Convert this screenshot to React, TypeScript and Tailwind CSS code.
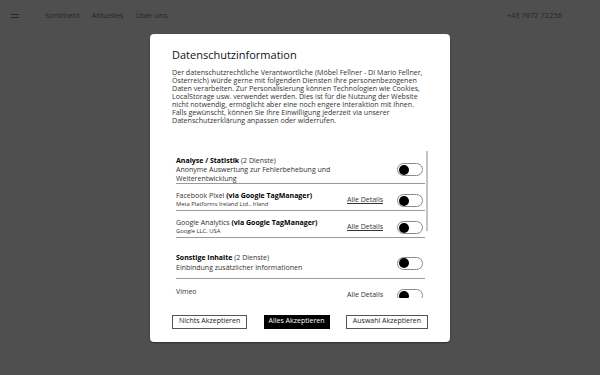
import React from "react";

const font = { fontFamily: '"Open Sans", "Liberation Sans", sans-serif' };

function Toggle() {
  return (
    <div className="flex h-[13px] w-[26px] shrink-0 items-center rounded-full border border-[#8a8a8a] bg-white px-[1px]">
      <div className="h-[10px] w-[10px] rounded-full bg-black" />
    </div>
  );
}

function Category({
  name,
  count,
  desc,
  pad,
}: {
  name: string;
  count: string;
  desc: React.ReactNode;
  pad: string;
}) {
  return (
    <div className={`flex items-center justify-between border-b border-[#9a9a9a] pr-[2px] ${pad}`}>
      <div className="text-[7px] leading-[8.5px] text-[#333]">
        <p className="mb-[1px]">
          <span className="font-bold text-black">{name}</span> {count}
        </p>
        <p>{desc}</p>
      </div>
      <Toggle />
    </div>
  );
}

function Service({ name, via, company }: { name: string; via: string; company: string }) {
  return (
    <div className="flex items-end justify-between border-b border-[#9a9a9a] pb-[2px] pt-[7px] pr-[2px]">
      <div className="text-[#333]">
        <p className="text-[7px] leading-[9px]">
          {name} <span className="font-bold text-black">{via}</span>
        </p>
        <p className="text-[5.8px] leading-[8px]">{company}</p>
      </div>
      <div className="flex items-center gap-[14px] pb-[1px]">
        <span className="text-[7px] text-[#333] underline">Alle Details</span>
        <Toggle />
      </div>
    </div>
  );
}

export default function App() {
  return (
    <div className="relative h-[375px] w-[600px] overflow-hidden bg-[#4f4f4f]" style={font}>
      <header className="flex h-[32px] items-center px-[11px] text-[7.5px] text-[#262626]">
        <div className="flex w-[8px] flex-col gap-[2px]">
          <span className="h-[1px] bg-[#262626]" />
          <span className="h-[1px] bg-[#262626]" />
        </div>
        <nav className="ml-[26px] flex gap-[12px]">
          <span>Sortiment</span>
          <span>Aktuelles</span>
          <span>Über uns</span>
        </nav>
        <span className="ml-auto mr-[27px]">+43 7672 72256</span>
      </header>

      <div className="absolute inset-0 flex items-center justify-center">
        <div className="flex h-[308px] w-[300px] flex-col rounded-[4px] bg-white px-[22px] pt-[13px] shadow-[0_1px_2px_rgba(0,0,0,0.4)]">
          <h2 className="text-[11px] leading-[16px] text-[#111]">Datenschutzinformation</h2>
          <p className="mt-[5px] text-[7.1px] leading-[8px] text-[#333]">
            Der datenschutzrechtliche Verantwortliche (Möbel Fellner - DI Mario Fellner,
            <br />
            Österreich) würde gerne mit folgenden Diensten Ihre personenbezogenen
            <br />
            Daten verarbeiten. Zur Personalisierung können Technologien wie Cookies,
            <br />
            LocalStorage usw. verwendet werden. Dies ist für die Nutzung der Website
            <br />
            nicht notwendig, ermöglicht aber eine noch engere Interaktion mit Ihnen.
            <br />
            Falls gewünscht, können Sie Ihre Einwilligung jederzeit via unserer
            <br />
            Datenschutzerklärung anpassen oder widerrufen.
          </p>

          <div className="mt-[27px] flex h-[147px] overflow-hidden">
            <div className="flex-1 pl-[4px] pr-[1px] pt-[6px]">
              <Category
                name="Analyse / Statistik"
                count="(2 Dienste)"
                pad="pb-[0px]"
                desc={
                  <>
                    Anonyme Auswertung zur Fehlerbehebung und
                    <br />
                    Weiterentwicklung
                  </>
                }
              />
              <Service name="Facebook Pixel" via="(via Google TagManager)" company="Meta Platforms Ireland Ltd., Irland" />
              <Service name="Google Analytics" via="(via Google TagManager)" company="Google LLC, USA" />
              <div className="pt-[16px]">
                <Category
                  name="Sonstige Inhalte"
                  count="(2 Dienste)"
                  pad="pb-[6px]"
                  desc="Einbindung zusätzlicher Informationen"
                />
              </div>
              <div className="flex items-start justify-between pt-[8px] pr-[2px]">
                <p className="text-[7px] leading-[9px] text-[#333]">Vimeo</p>
                <div className="mt-[2px] flex items-center gap-[14px]">
                  <span className="text-[7px] text-[#333] underline">Alle Details</span>
                  <Toggle />
                </div>
              </div>
            </div>
            <div className="w-[2px] shrink-0">
              <div className="h-[80px] bg-[#c4c4c4]" />
            </div>
          </div>

          <div className="mt-[17px] flex items-center justify-between text-[7px]">
            <button className="h-[14px] border border-[#555] px-[6px] text-[#222]">Nichts Akzeptieren</button>
            <button className="h-[14px] bg-black px-[5px] text-white">Alles Akzeptieren</button>
            <button className="h-[14px] border border-[#555] px-[6px] text-[#222]">Auswahl Akzeptieren</button>
          </div>
        </div>
      </div>
    </div>
  );
}
